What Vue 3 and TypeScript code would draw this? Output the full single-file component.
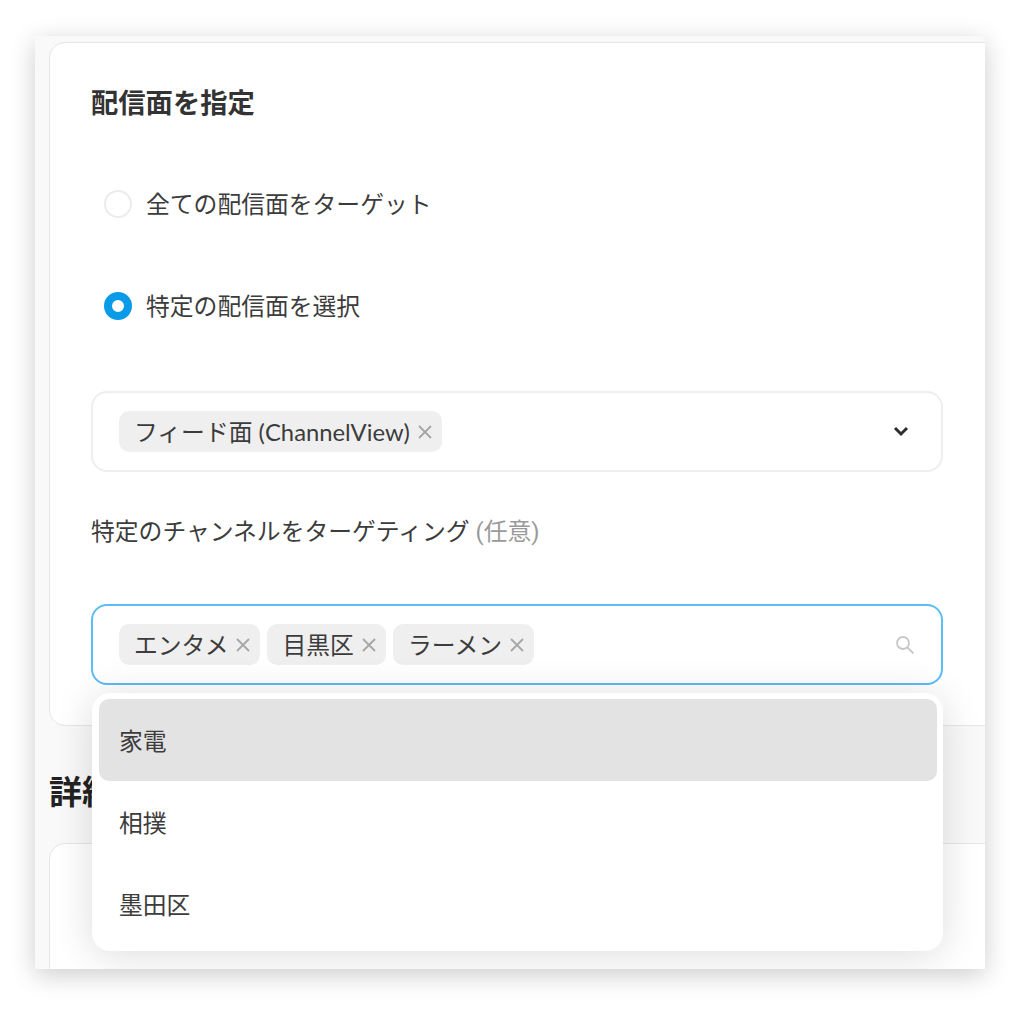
<script setup lang="ts">
import { ref } from 'vue'

const placements = ref(['フィード面 (ChannelView)'])
const channels = ref(['エンタメ', '目黒区', 'ラーメン'])
const options = ['家電', '相撲', '墨田区']
</script>

<template>
  <div class="page">
    <div class="panel">
      <section class="card">
        <h2 class="title">配信面を指定</h2>
        <label class="radio first">
          <span class="dot"></span>
          <span class="radio-text">全ての配信面をターゲット</span>
        </label>
        <label class="radio second">
          <span class="dot on"></span>
          <span class="radio-text">特定の配信面を選択</span>
        </label>
        <div class="select">
          <div class="chips">
            <span v-for="p in placements" :key="p" class="chip">
              <span class="chip-text">{{ p }}</span>
              <svg class="x" viewBox="0 0 14 14"><path d="M1 1l12 12M13 1L1 13" /></svg>
            </span>
          </div>
          <svg class="chevron" viewBox="0 0 16 11"><path d="M2 2l6 6 6-6" /></svg>
        </div>
        <p class="label">特定のチャンネルをターゲティング <span class="optional">(任意)</span></p>
        <div class="select focused">
          <div class="chips">
            <span v-for="c in channels" :key="c" class="chip">
              <span class="chip-text">{{ c }}</span>
              <svg class="x" viewBox="0 0 14 14"><path d="M1 1l12 12M13 1L1 13" /></svg>
            </span>
          </div>
          <svg class="search" viewBox="0 0 20 20">
            <circle cx="8" cy="8" r="6" />
            <path d="M12.5 12.5l6 6" />
          </svg>
        </div>
      </section>
      <h2 class="heading">詳細設定</h2>
      <section class="card lower"></section>

      <ul class="menu">
        <li v-for="(o, i) in options" :key="o" :class="{ active: i === 0 }">{{ o }}</li>
      </ul>
    </div>
  </div>
</template>

<style>
body {
  background: #fff;
}
</style>

<style scoped>
.page {
  height: 1011px;
  padding: 36px 39px 0 35px;
  box-sizing: border-box;
  font-family: Roboto, "Noto Sans CJK JP", sans-serif;
  color: #3c3c3c;
}

.panel {
  position: relative;
  height: 933px;
  padding: 6px 0 0 14px;
  box-sizing: border-box;
  overflow: hidden;
  background: #f9f9f9;
  box-shadow: 0 6px 24px rgba(0, 0, 0, 0.2);
}

.card {
  width: 1000px;
  height: 684px;
  box-sizing: border-box;
  padding: 39px 0 0 41px;
  background: #fff;
  border: 1px solid #e6e6e6;
  border-radius: 16px;
}

.title {
  margin: 0;
  font-size: 27.3px;
  line-height: 45px;
  font-weight: 700;
  color: #333;
}

.radio {
  display: flex;
  align-items: center;
  gap: 14px;
  padding-left: 13px;
  font-size: 23.8px;
  line-height: 40px;
}

.radio.first {
  margin-top: 56px;
}

.radio.second {
  margin-top: 60px;
}

.radio-text {
  padding-top: 2px;
}

.dot {
  width: 28px;
  height: 28px;
  box-sizing: border-box;
  border: 2px solid #ececec;
  border-radius: 50%;
  background: #fff;
}

.dot.on {
  border: 8px solid #0a9be8;
}

.select {
  display: flex;
  align-items: center;
  justify-content: space-between;
  width: 852px;
  height: 81px;
  box-sizing: border-box;
  margin-top: 64px;
  padding: 0 32px 0 26px;
  border: 2px solid #eee;
  border-radius: 16px;
}

.select.focused {
  margin-top: 52px;
  padding-right: 26px;
  border-color: #5cbcf5;
}

.chips {
  display: flex;
  gap: 7px;
}

.chip {
  display: flex;
  align-items: center;
  gap: 8px;
  height: 41px;
  padding: 0 10px 0 15px;
  background: #efefef;
  border-radius: 10px;
  font-family: Lato, "Noto Sans CJK JP", sans-serif;
  font-size: 23.8px;
  white-space: nowrap;
}

.chip-text {
  padding-bottom: 2px;
}

.x {
  width: 14px;
  height: 14px;
  fill: none;
  stroke: #a6a6a6;
  stroke-width: 1.8;
}

.chevron {
  width: 16px;
  height: 11px;
  fill: none;
  stroke: #2d2d2d;
  stroke-width: 3;
}

.search {
  width: 20px;
  height: 20px;
  fill: none;
  stroke: #c8c8c8;
  stroke-width: 1.8;
}

.label {
  margin: 40px 0 0;
  font-size: 23.8px;
  line-height: 40px;
}

.optional {
  color: #9a9a9a;
}

.heading {
  margin: 45px 0 0;
  font-size: 33px;
  line-height: 44px;
  font-weight: 700;
  color: #222;
}

.card.lower {
  margin-top: 28px;
  height: 300px;
}

.menu {
  position: absolute;
  left: 57px;
  top: 657px;
  width: 851px;
  height: 258px;
  box-sizing: border-box;
  margin: 0;
  padding: 6px 6px 0 7px;
  list-style: none;
  background: #fff;
  border-radius: 18px;
  box-shadow: 0 4px 40px rgba(0, 0, 0, 0.14);
}

.menu li {
  display: flex;
  align-items: center;
  height: 82px;
  box-sizing: border-box;
  padding: 0 0 2px 20px;
  border-radius: 10px;
  font-size: 23.8px;
}

.menu li.active {
  background: #e3e3e3;
}
</style>
